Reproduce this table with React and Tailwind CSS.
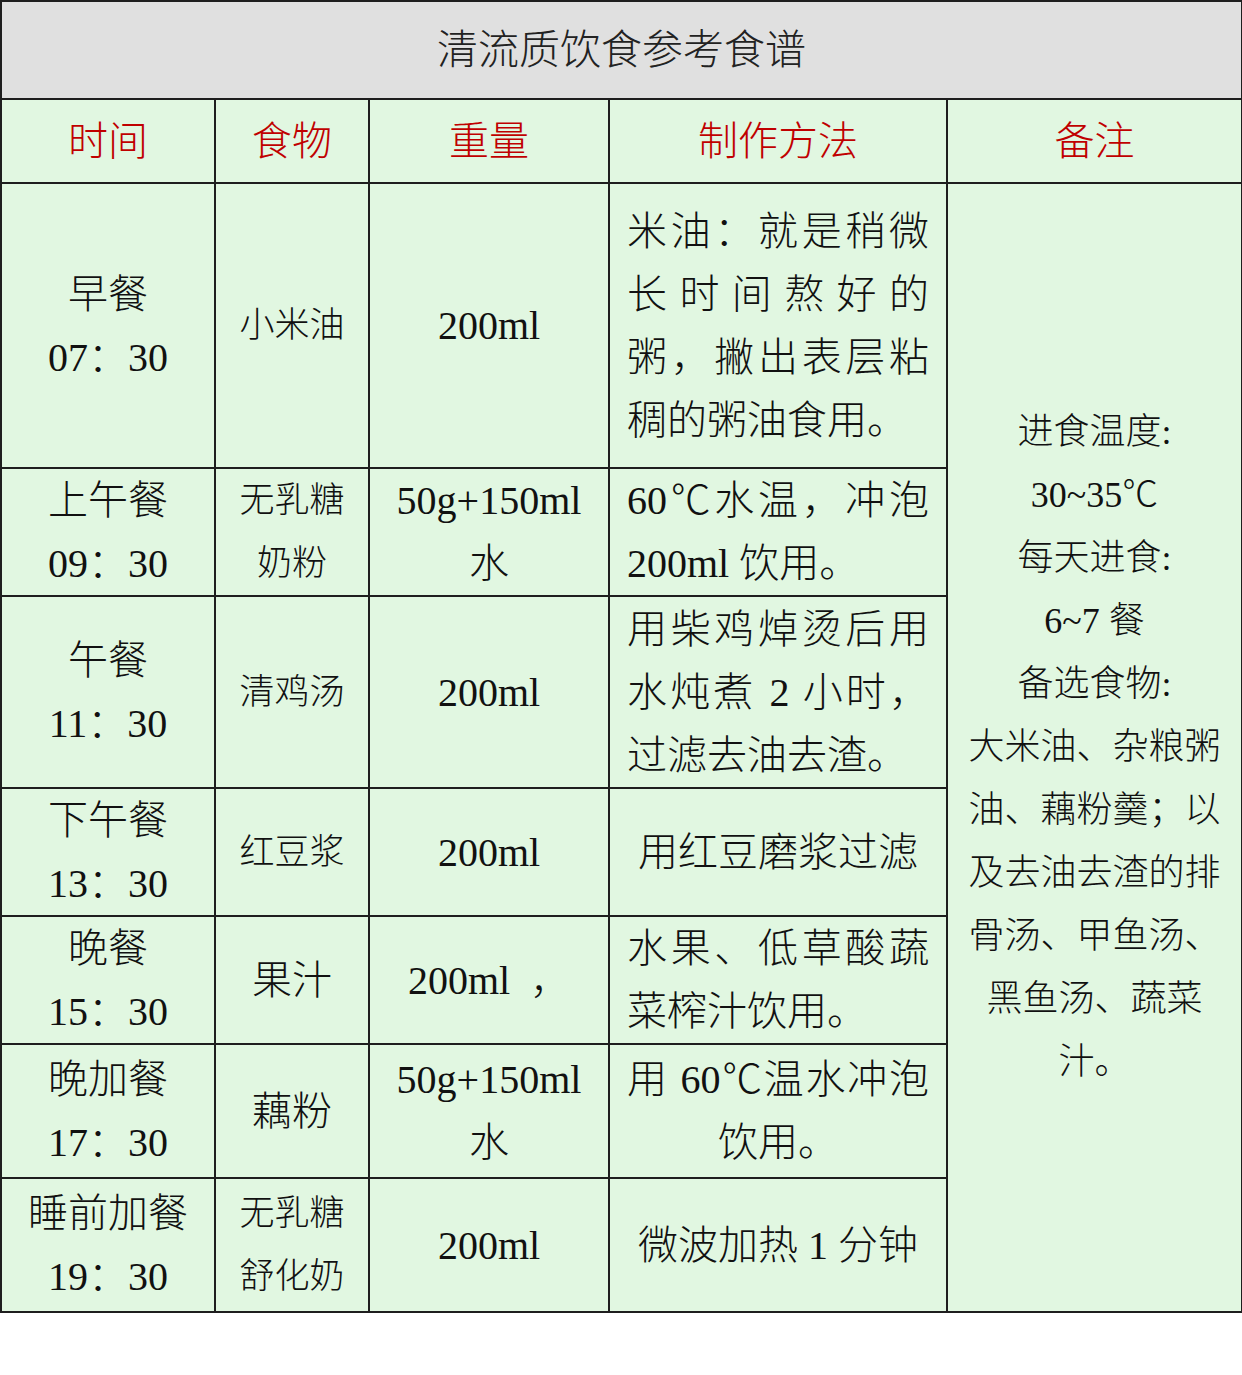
const rows = [
  {
    h: "h-[285px]",
    time: ["早餐", "07：30"],
    food: ["小米油"],
    foodBig: false,
    weight: ["200ml"],
    method: [
      ["米油：就是稍微", true],
      ["长时间熬好的", true],
      ["粥，撇出表层粘", true],
      ["稠的粥油食用。", false],
    ],
  },
  {
    h: "h-[128px]",
    time: ["上午餐", "09：30"],
    food: ["无乳糖", "奶粉"],
    weight: ["50g+150ml", "水"],
    method: [
      ["60℃水温，冲泡", true],
      ["200ml 饮用。", false],
    ],
  },
  {
    h: "h-[192px]",
    time: ["午餐", "11：30"],
    food: ["清鸡汤"],
    weight: ["200ml"],
    method: [
      ["用柴鸡焯烫后用", true],
      ["水炖煮 2 小时，", true],
      ["过滤去油去渣。", false],
    ],
  },
  {
    h: "h-[128px]",
    time: ["下午餐", "13：30"],
    food: ["红豆浆"],
    weight: ["200ml"],
    center: true,
    method: [["用红豆磨浆过滤", false]],
  },
  {
    h: "h-[128px]",
    time: ["晚餐", "15：30"],
    food: ["果汁"],
    foodBig: true,
    weight: ["200ml  ，"],
    method: [
      ["水果、低草酸蔬", true],
      ["菜榨汁饮用。", false],
    ],
  },
  {
    h: "h-[134px]",
    time: ["晚加餐", "17：30"],
    food: ["藕粉"],
    foodBig: true,
    weight: ["50g+150ml", "水"],
    center: true,
    method: [
      ["用 60℃温水冲泡", true],
      ["饮用。", false],
    ],
  },
  {
    h: "h-[134px]",
    time: ["睡前加餐", "19：30"],
    food: ["无乳糖", "舒化奶"],
    weight: ["200ml"],
    center: true,
    method: [["微波加热 1 分钟", false]],
  },
];

const notes = [
  "进食温度:",
  "30~35℃",
  "每天进食:",
  "6~7 餐",
  "备选食物:",
  "大米油、杂粮粥",
  "油、藕粉羹；以",
  "及去油去渣的排",
  "骨汤、甲鱼汤、",
  "黑鱼汤、蔬菜",
  "汁。",
];

const cell = "border-2 border-[#1e1e1e] align-middle";

function Lines({ items }) {
  return items.map((t, i) => <div key={i}>{t}</div>);
}

export default function App() {
  return (
    <div className="w-[1242px] h-[1375px] bg-white font-['Liberation_Serif','Noto_Sans_CJK_SC',serif] font-light text-[#111]">
      <table className="w-[1241px] border-collapse table-fixed bg-[#e1f7e1] leading-[63px]">
        <colgroup>
          <col className="w-[214px]" />
          <col className="w-[154px]" />
          <col className="w-[240px]" />
          <col className="w-[338px]" />
          <col className="w-[295px]" />
        </colgroup>
        <tbody>
          <tr className="h-[98px]">
            <td colSpan={5} className={`${cell} bg-[#e0e0e0] text-center text-[41px] text-[#222]`}>
              清流质饮食参考食谱
            </td>
          </tr>
          <tr className="h-[84px] text-[40px] text-[#c00000] text-center">
            <td className={cell}>时间</td>
            <td className={cell}>食物</td>
            <td className={cell}>重量</td>
            <td className={cell}>制作方法</td>
            <td className={cell}>备注</td>
          </tr>
          {rows.map((r, i) => (
            <tr key={i} className={r.h}>
              <td className={`${cell} text-center text-[40px]`}>
                <Lines items={r.time} />
              </td>
              <td className={`${cell} text-center ${r.foodBig ? "text-[40px]" : "text-[35px]"}`}>
                <Lines items={r.food} />
              </td>
              <td className={`${cell} text-center text-[40px] whitespace-pre`}>
                <Lines items={r.weight} />
              </td>
              <td className={`${cell} px-[17px] text-[40px] ${r.center ? "text-center" : "text-left"}`}>
                {r.method.map(([t, j], k) => (
                  <div key={k} className={j ? "text-justify [text-align-last:justify]" : ""}>
                    {t}
                  </div>
                ))}
              </td>
              {i === 0 && (
                <td rowSpan={rows.length} className={`${cell} text-center text-[36px] px-2`}>
                  <Lines items={notes} />
                </td>
              )}
            </tr>
          ))}
        </tbody>
      </table>
    </div>
  );
}
